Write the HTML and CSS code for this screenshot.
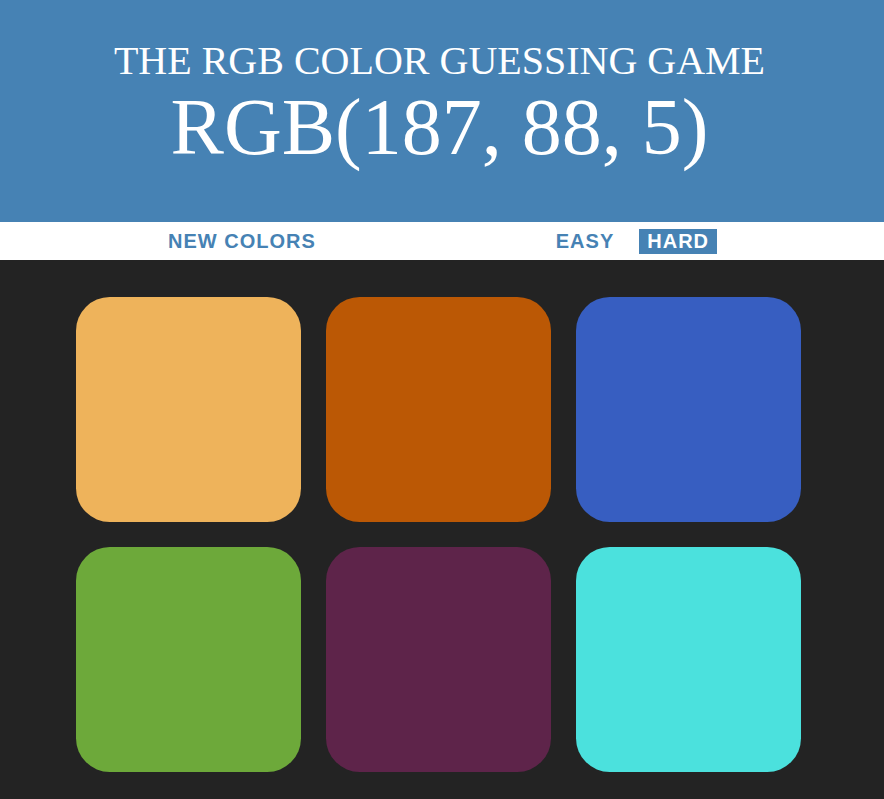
FILE: index.html
```html
<!DOCTYPE html>
<html lang="en">
<head>
<meta charset="utf-8">
<title>Color Game</title>
<link rel="stylesheet" href="styles.css">
</head>
<body>
  <h1 class="title">
    <span class="title-line">The RGB Color Guessing Game</span>
    <span class="title-color">RGB(187, 88, 5)</span>
  </h1>
  <div class="stripe">
    <button class="btn btn-reset">New Colors</button>
    <button class="btn btn-easy">Easy</button>
    <button class="btn btn-hard selected">Hard</button>
  </div>
  <div class="board">
    <div class="square sq-1"></div>
    <div class="square sq-2"></div>
    <div class="square sq-3"></div>
    <div class="square sq-4"></div>
    <div class="square sq-5"></div>
    <div class="square sq-6"></div>
  </div>
</body>
</html>
```
FILE: styles.css
```css
html, body {
  margin: 0;
  padding: 0;
}
body {
  background: #232323;
  font-family: "Liberation Sans", Arial, sans-serif;
  height: 799px;
  overflow: hidden;
}
.title {
  margin: 0;
  background: #4682b4;
  color: #fff;
  font-family: "Liberation Serif", "Times New Roman", serif;
  font-weight: normal;
  font-size: 40px;
  line-height: 1.1;
  text-align: center;
  text-transform: uppercase;
  height: 222px;
  box-sizing: border-box;
  padding: 39px 5px 0 0;
}
.title-line,
.title-color {
  display: block;
}
.title-color {
  font-size: 200%;
}
.stripe {
  background: #fff;
  height: 38px;
  display: flex;
  align-items: center;
}
.btn {
  border: none;
  background: none;
  color: #4682b4;
  font-family: "Liberation Sans", Arial, sans-serif;
  font-weight: bold;
  font-size: 20px;
  letter-spacing: 1px;
  text-transform: uppercase;
  padding: 0 8px;
  height: 25px;
  line-height: 25px;
  margin: 0;
  cursor: pointer;
}
.btn-reset {
  margin-left: 160px;
}
.btn-easy {
  margin-left: 224px;
}
.btn-hard {
  margin-left: 17px;
}
.selected {
  background: #4682b4;
  color: #fff;
}
.board {
  display: grid;
  grid-template-columns: repeat(3, 225px);
  grid-auto-rows: 225px;
  gap: 25px;
  padding: 37px 0 0 76px;
}
.square {
  border-radius: 15%;
}
.sq-1 { background: #eeb35b; }
.sq-2 { background: #bb5805; }
.sq-3 { background: #375ec1; }
.sq-4 { background: #6da93a; }
.sq-5 { background: #5e244a; }
.sq-6 { background: #4be1dd; }
```
